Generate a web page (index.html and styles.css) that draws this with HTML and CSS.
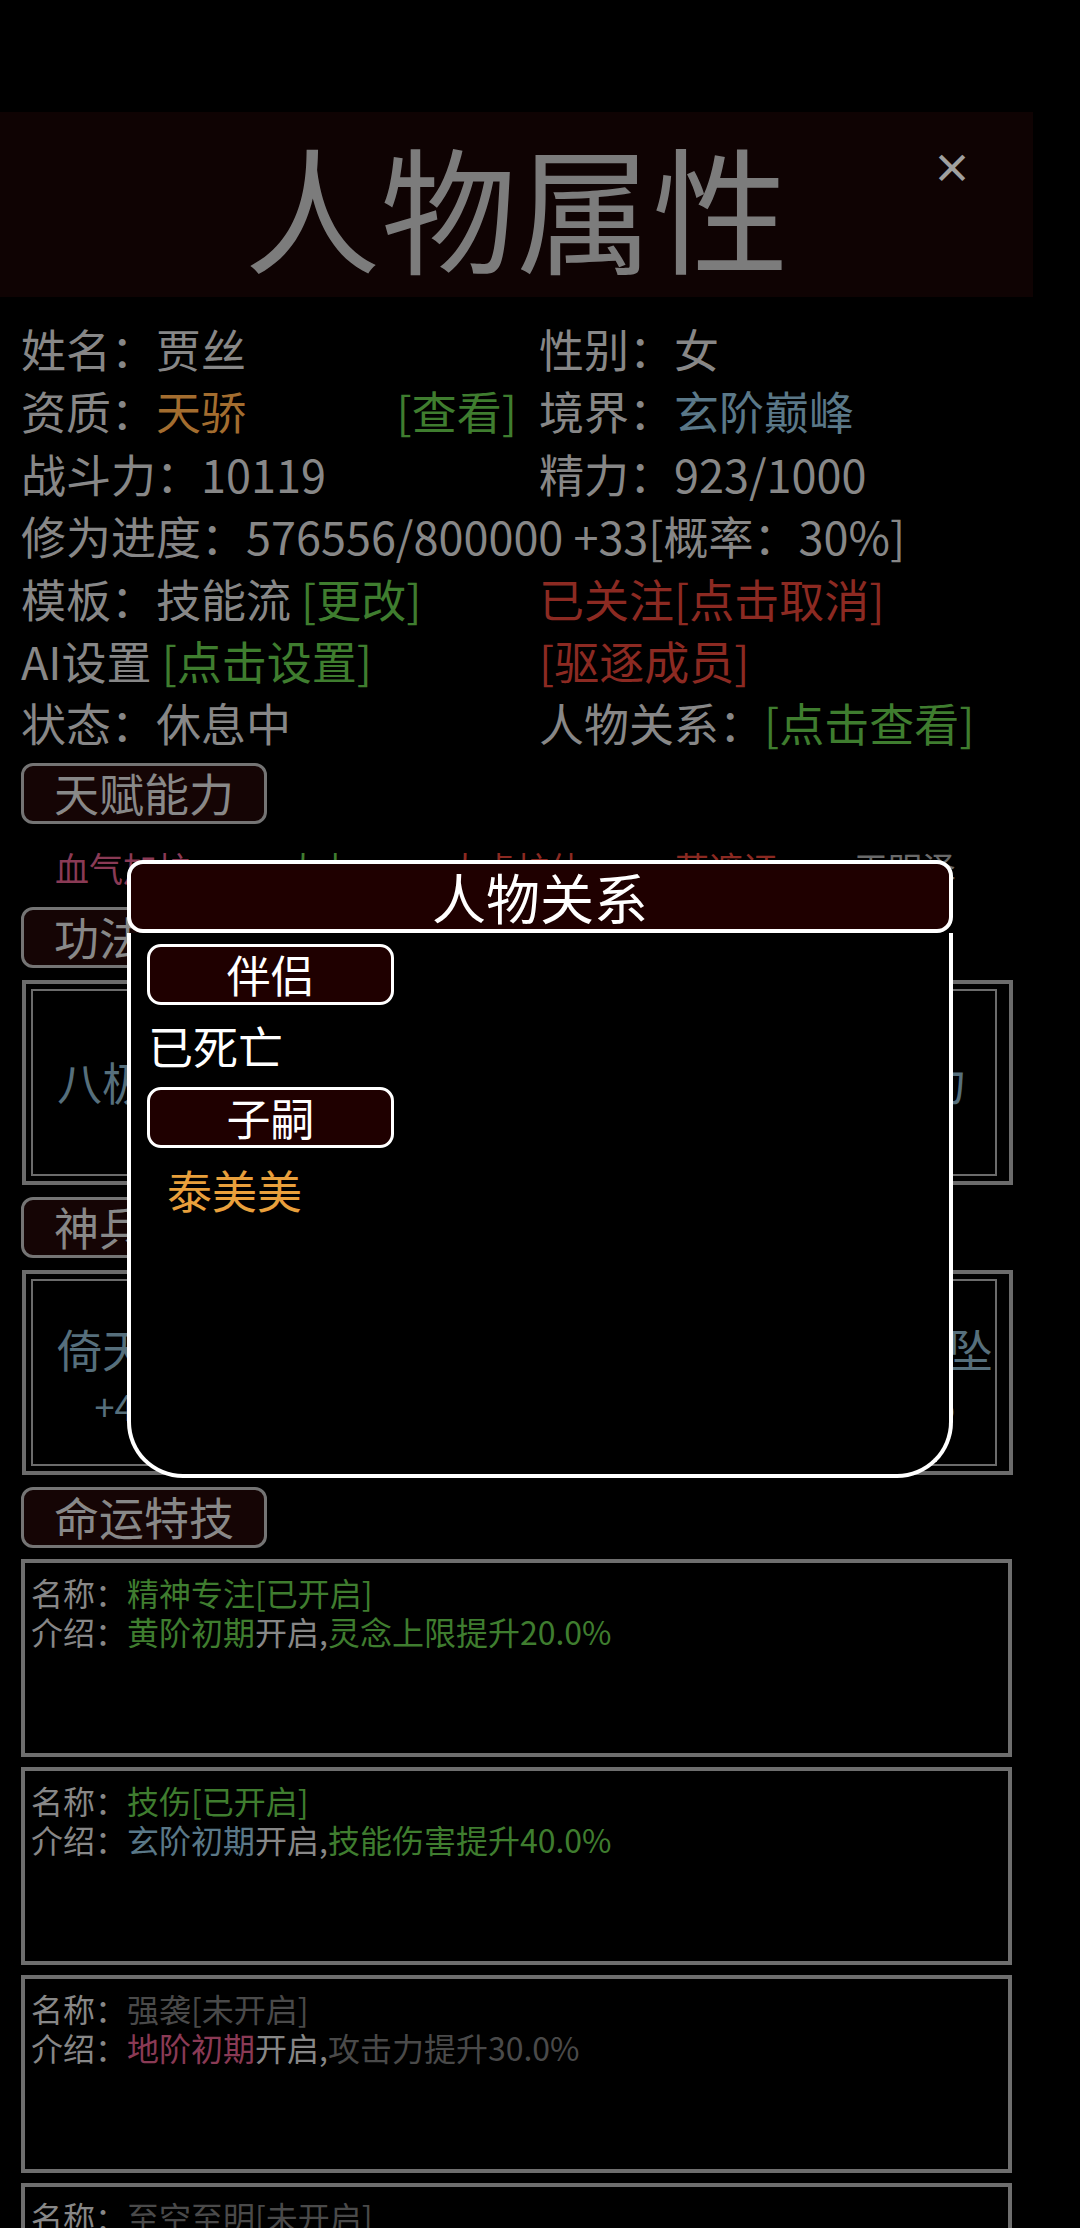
FILE: index.html
```html
<!DOCTYPE html>
<html lang="zh">
<head>
    <meta charset="UTF-8">
    <meta name="viewport" content="width=device-width, initial-scale=1.0">
    <title>人物属性</title>
    <link rel="stylesheet" href="styles.css">
</head>
<body>
    <header class="title-bar">
        <h1>人物属性</h1>
        <span class="close">×</span>
    </header>

    <div class="info">
        <div>姓名：贾丝</div>
        <div>性别：女</div>
        <div class="split"><span>资质：<span class="orange">天骄</span></span><span class="green">[查看]</span></div>
        <div>境界：<span class="blue">玄阶巅峰</span></div>
        <div>战斗力：10119</div>
        <div>精力：923/1000</div>
        <div class="wide">修为进度：576556/800000 +33[概率：30%]</div>
        <div>模板：技能流 <span class="green">[更改]</span></div>
        <div class="red">已关注[点击取消]</div>
        <div>AI设置 <span class="green">[点击设置]</span></div>
        <div class="red">[驱逐成员]</div>
        <div>状态：休息中</div>
        <div>人物关系：<span class="green">[点击查看]</span></div>
    </div>

    <div class="tab first">天赋能力</div>
    <div class="talents">
        <span class="pink">血气加护</span>
        <span class="green">大力</span>
        <span class="red">大虎护体</span>
        <span class="red">草遮证</span>
        <span>天明泽</span>
    </div>

    <div class="tab">功法秘籍</div>
    <div class="slot-box">
        <div class="slot-inner">
            <div class="slot-item">八极拳</div>
            <div class="slot-item">金刚之力</div>
        </div>
    </div>

    <div class="tab">神兵利器</div>
    <div class="slot-box">
        <div class="slot-inner weapons">
            <div class="slot-item">倚天剑<small>+40</small></div>
            <div class="slot-item">星辰坠<small>+25</small></div>
        </div>
    </div>

    <div class="tab">命运特技</div>
    <div class="fate-list">
        <div class="fate">
            <div>名称：<span class="green">精神专注[已开启]</span></div>
            <div>介绍：<span class="green">黄阶初期</span>开启,<span class="green">灵念上限提升20.0%</span></div>
        </div>
        <div class="fate">
            <div>名称：<span class="green">技伤[已开启]</span></div>
            <div>介绍：<span class="blue">玄阶初期</span>开启,<span class="green">技能伤害提升40.0%</span></div>
        </div>
        <div class="fate">
            <div>名称：<span class="dim">强袭[未开启]</span></div>
            <div>介绍：<span class="pink">地阶初期</span>开启,<span class="dim">攻击力提升30.0%</span></div>
        </div>
        <div class="fate">
            <div>名称：<span class="dim">至空至明[未开启]</span></div>
            <div>介绍：<span class="orange">天阶初期</span>开启,<span class="dim">全属性提升10.0%</span></div>
        </div>
    </div>

    <!-- 人物关系 弹窗 -->
    <div class="modal">
        <div class="modal-head">人物关系</div>
        <div class="modal-body">
            <div class="label-btn">伴侣</div>
            <div class="line">已死亡</div>
            <div class="label-btn">子嗣</div>
            <div class="line child">泰美美</div>
        </div>
    </div>
</body>
</html>
```

FILE: styles.css
```css
/* 기본 */
body {
    margin: 0;
    padding: 112px 0 0;
    background-color: #000;
    color: #878787;
    font-family: "Noto Sans CJK SC", "Noto Sans", sans-serif;
    width: 1080px;
    overflow: hidden;
}

.green { color: #3f7d2f; }
.orange { color: #a36d2f; }
.blue { color: #5a7888; }
.red { color: #8c2a22; }
.pink { color: #8a3a55; }
.dim { color: #4a4a4a; }

/* 상단 타이틀 */
.title-bar {
    position: relative;
    width: 1033px;
    height: 185px;
    background-color: #0f0303;
    display: flex;
    justify-content: center;
    align-items: center;
}
.title-bar h1 {
    margin: 0;
    font-size: 136px;
    font-weight: normal;
    line-height: 185px;
    color: #7c7c7c;
}
.close {
    position: absolute;
    left: 932px;
    top: 24px;
    font-size: 40px;
    font-weight: bold;
    line-height: 60px;
    color: #a0a0a0;
}

/* 인물 정보 */
.info {
    display: grid;
    grid-template-columns: 518px 1fr;
    padding: 21px 0 0 21px;
    font-size: 45px;
    line-height: 62.4px;
    white-space: nowrap;
}
.info .wide {
    grid-column: span 2;
}
.info .split {
    display: flex;
    justify-content: space-between;
    padding-right: 22px;
}

/* 섹션 버튼 */
.tab {
    box-sizing: border-box;
    width: 246px;
    height: 61px;
    margin: 12px 0 0 21px;
    border: 3px solid #747474;
    border-radius: 12px;
    background-color: #150505;
    color: #888;
    font-size: 45px;
    line-height: 54px;
    text-align: center;
}
.tab.first {
    margin-top: 8px;
}

.talents {
    display: grid;
    grid-template-columns: 231px 162px 227px 179px 1fr;
    padding: 21px 0 4px 55px;
    font-size: 34px;
    line-height: 46px;
    color: #6a6a6a;
    white-space: nowrap;
}

/* 공법 / 신병 */
.slot-box {
    box-sizing: border-box;
    width: 991px;
    height: 205px;
    margin: 12px 0 0 22px;
    border: 4px solid #6b6b6b;
    padding: 5px 12px 5px 5px;
}
.slot-inner {
    box-sizing: border-box;
    height: 100%;
    border: 2px solid #6b6b6b;
    display: flex;
    justify-content: space-between;
    align-items: center;
    padding: 0 28px 0 24px;
    font-size: 45px;
    color: #566f7c;
}
.slot-item {
    display: flex;
    flex-direction: column;
    align-items: center;
    line-height: 56px;
}
.weapons {
    padding: 10px 2px 0 24px;
}
.slot-item small {
    font-size: 36px;
}

/* 명운 특기 */
.fate-list {
    display: flex;
    flex-direction: column;
    gap: 10px;
    margin: 11px 0 0 21px;
}
.fate {
    box-sizing: border-box;
    width: 991px;
    height: 198px;
    flex-shrink: 0;
    border: 4px solid #6e6e6e;
    padding: 10px 6px;
    font-size: 32px;
    line-height: 39px;
    color: #878787;
}

/* 팝업 */
.modal {
    position: absolute;
    left: 127px;
    top: 860px;
    width: 826px;
    height: 618px;
    display: flex;
    flex-direction: column;
}
.modal-head {
    height: 65px;
    border: 4px solid #fff;
    border-radius: 16px;
    background-color: #1f0000;
    color: #fff;
    font-size: 54px;
    line-height: 65px;
    text-align: center;
}
.modal-body {
    flex: 1;
    border: 4px solid #fff;
    border-top: none;
    border-radius: 0 0 56px 56px;
    background-color: #000;
    padding: 11px 16px;
}
.label-btn {
    box-sizing: border-box;
    width: 247px;
    height: 61px;
    border: 3px solid #fff;
    border-radius: 14px;
    background-color: #1f0000;
    color: #fff;
    font-size: 44px;
    line-height: 54px;
    text-align: center;
}
.line {
    font-size: 45px;
    line-height: 82px;
    color: #fff;
    padding-left: 1px;
}
.line.child {
    line-height: 84px;
    padding-left: 20px;
    color: #e9a03c;
}
```
